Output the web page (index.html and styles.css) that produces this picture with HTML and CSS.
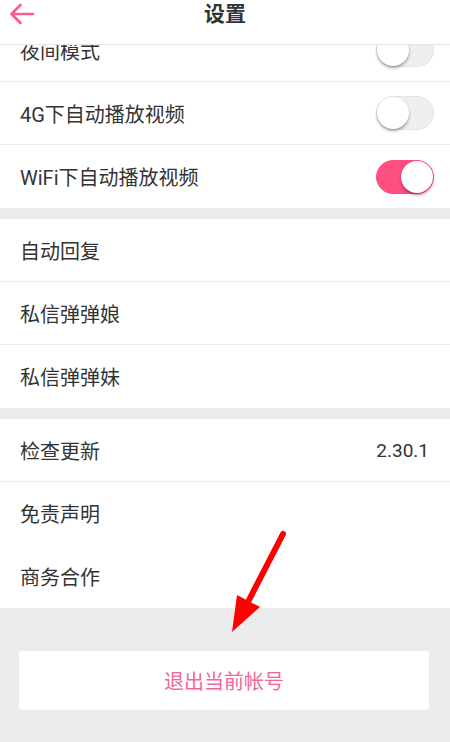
FILE: index.html
```html
<!DOCTYPE html>
<html lang="zh-CN">
<head>
<meta charset="utf-8">
<title>设置</title>
<link rel="stylesheet" href="styles.css">
</head>
<body>
<div class="page">
  <header class="topbar">
    <svg class="back" viewBox="0 0 26 22" width="26" height="22"><path d="M2.5 11 H24 M11.5 2 L2.5 11 L11.5 20" fill="none" stroke="#fb5b8c" stroke-width="2.6" stroke-linecap="round" stroke-linejoin="round"/></svg>
    <h1 class="title">设置</h1>
  </header>
  <main class="content">
    <section class="group">
      <div class="row"><span class="label">夜间模式</span><span class="toggle"><span class="knob"></span></span></div>
      <div class="row"><span class="label">4G下自动播放视频</span><span class="toggle"><span class="knob"></span></span></div>
      <div class="row"><span class="label">WiFi下自动播放视频</span><span class="toggle on"><span class="knob"></span></span></div>
    </section>
    <section class="group">
      <div class="row"><span class="label">自动回复</span></div>
      <div class="row"><span class="label">私信弹弹娘</span></div>
      <div class="row"><span class="label">私信弹弹妹</span></div>
    </section>
    <section class="group">
      <div class="row"><span class="label">检查更新</span><span class="value">2.30.1</span></div>
      <div class="row plain"><span class="label">免责声明</span></div>
      <div class="row"><span class="label">商务合作</span></div>
    </section>
    <div class="logout-wrap">
      <button class="logout">退出当前帐号</button>
    </div>
  </main>
  <svg class="annot" viewBox="0 0 450 742" width="450" height="742">
    <line x1="283" y1="534" x2="249" y2="600" stroke="#ff0000" stroke-width="6" stroke-linecap="round"/>
    <polygon points="232,632 237,595 260,607" fill="#ff0000"/>
  </svg>
</div>
</body>
</html>
```

FILE: styles.css
```css
* { box-sizing: border-box; }

html, body {
  margin: 0;
  padding: 0;
}

body {
  background: #ececee;
  font-family: Roboto, "Noto Sans CJK SC", "Noto Sans", sans-serif;
  color: #333;
}

.page {
  position: relative;
  width: 450px;
  min-height: 742px;
  overflow: hidden;
}

.topbar {
  position: relative;
  z-index: 2;
  height: 45px;
  background: #fff;
  border-bottom: 1px solid #e6e6e6;
  display: flex;
  justify-content: center;
  align-items: flex-start;
}

.back {
  position: absolute;
  left: 9px;
  top: 3px;
}

.title {
  margin: 2px 0 0;
  font-size: 21px;
  line-height: 24px;
  font-weight: 700;
  color: #333;
}

.content {
  margin-top: -26px;
  display: flex;
  flex-direction: column;
  gap: 11px;
}

.group {
  background: #fff;
  display: flex;
  flex-direction: column;
}

.row {
  height: 63px;
  padding: 0 16px 0 20px;
  display: flex;
  align-items: center;
  justify-content: space-between;
  border-bottom: 1px solid #ececec;
}

.row:last-child,
.row.plain {
  border-bottom: none;
}

.label {
  font-size: 20px;
  color: #333;
}

.value {
  font-size: 19px;
  color: #333;
  margin-right: 5px;
}

.toggle {
  width: 58px;
  height: 34px;
  border-radius: 17px;
  background: #efefef;
  border: 1px solid #e4e4e4;
  display: flex;
  align-items: center;
  justify-content: flex-start;
  padding: 0;
}

.toggle .knob {
  width: 32px;
  height: 32px;
  border-radius: 50%;
  background: #fff;
  box-shadow: 0 2px 3px rgba(0, 0, 0, 0.35);
}

.toggle.on {
  background: #fd4f82;
  border-color: #fd4f82;
  justify-content: flex-end;
}

.toggle.on .knob {
  box-shadow: 0 2px 3px rgba(120, 0, 40, 0.5);
}

.logout-wrap {
  padding: 32px 21px 0 19px;
}

.logout {
  width: 100%;
  height: 59px;
  border: none;
  border-radius: 3px;
  background: #fff;
  color: #f2669a;
  font-family: Roboto, "Noto Sans CJK SC", sans-serif;
  font-size: 20px;
}

.annot {
  position: absolute;
  left: 0;
  top: 0;
  pointer-events: none;
  z-index: 3;
}
```
